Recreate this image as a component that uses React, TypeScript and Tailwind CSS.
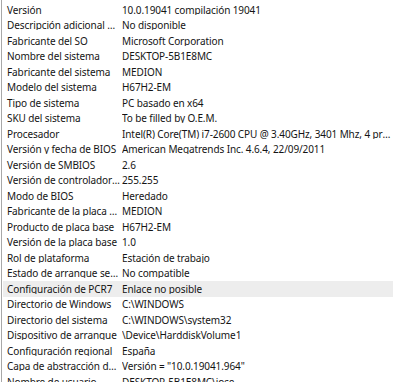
import React from "react";

const rows: [string, string][] = [
  ["Versión", "10.0.19041 compilación 19041"],
  ["Descripción adicional del SO", "No disponible"],
  ["Fabricante del SO", "Microsoft Corporation"],
  ["Nombre del sistema", "DESKTOP-5B1E8MC"],
  ["Fabricante del sistema", "MEDION"],
  ["Modelo del sistema", "H67H2-EM"],
  ["Tipo de sistema", "PC basado en x64"],
  ["SKU del sistema", "To be filled by O.E.M."],
  ["Procesador", "Intel(R) Core(TM) i7-2600 CPU @ 3.40GHz, 3401 Mhz, 4 procesadores principales, 8 procesadores lógicos"],
  ["Versión y fecha de BIOS", "American Megatrends Inc. 4.6.4, 22/09/2011"],
  ["Versión de SMBIOS", "2.6"],
  ["Versión de controlador integrado", "255.255"],
  ["Modo de BIOS", "Heredado"],
  ["Fabricante de la placa base", "MEDION"],
  ["Producto de placa base", "H67H2-EM"],
  ["Versión de la placa base", "1.0"],
  ["Rol de plataforma", "Estación de trabajo"],
  ["Estado de arranque seguro", "No compatible"],
  ["Configuración de PCR7", "Enlace no posible"],
  ["Directorio de Windows", "C:\\WINDOWS"],
  ["Directorio del sistema", "C:\\WINDOWS\\system32"],
  ["Dispositivo de arranque", "\\Device\\HarddiskVolume1"],
  ["Configuración regional", "España"],
  ["Capa de abstracción de hardware", "Versión = \"10.0.19041.964\""],
  ["Nombre de usuario", "DESKTOP-5B1E8MC\\jose"],
];

export default function App() {
  return (
    <div
      className="w-[400px] h-[382px] overflow-hidden bg-white text-[10px] tracking-[-0.1px] text-[#141414] flex"
      style={{ fontFamily: '"Noto Sans", "Open Sans", sans-serif' }}
    >
      <div className="w-px ml-px bg-[#a8a8a8] shrink-0" />
      <div className="flex flex-col pt-[2px] pl-[1px] w-[391px]">
        {rows.map(([k, v], i) => (
          <div
            key={i}
            className={`flex items-center h-[15.5px] shrink-0 ${i === 18 ? "bg-[#ededed]" : ""}`}
          >
            <div className="w-[119px] pl-[4px] pr-[1px] shrink-0 truncate leading-none">{k}</div>
            <div className="flex-1 min-w-0 truncate leading-none">{v}</div>
          </div>
        ))}
      </div>
    </div>
  );
}
